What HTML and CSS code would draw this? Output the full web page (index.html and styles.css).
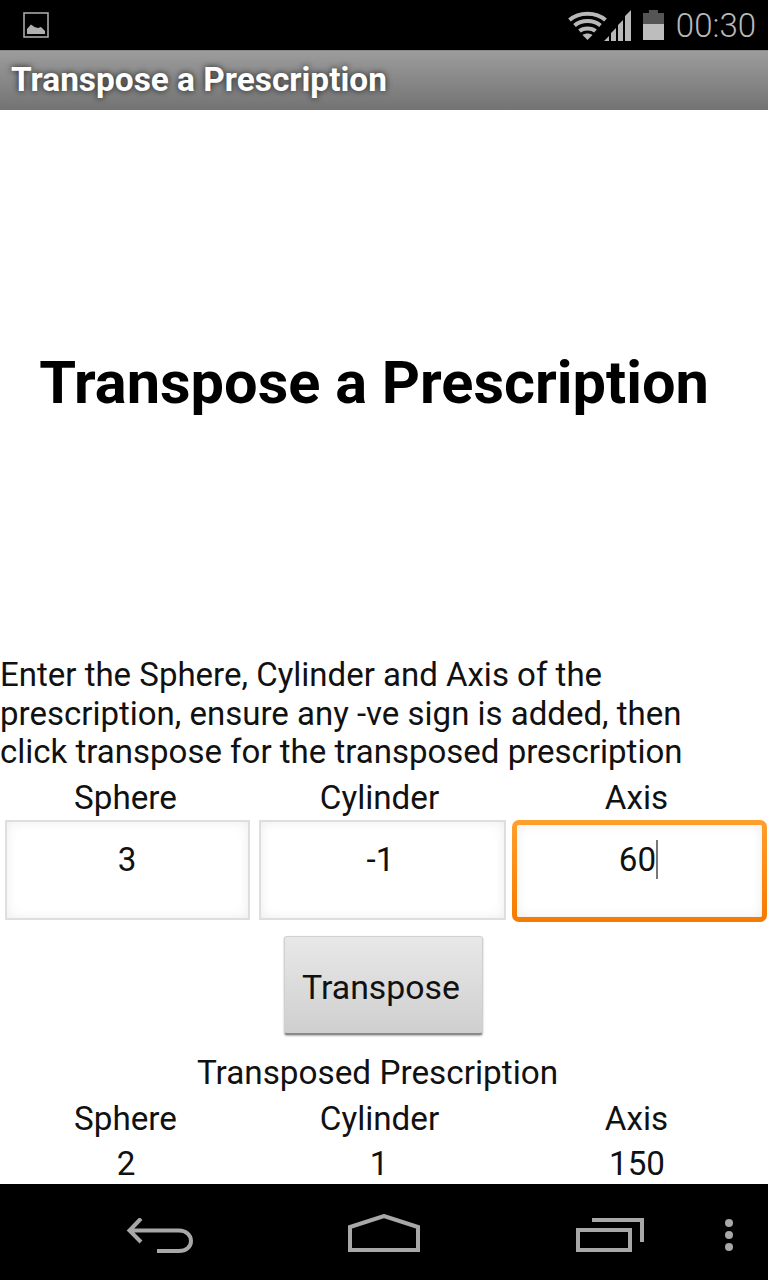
FILE: index.html
```html
<!DOCTYPE html>
<html lang="en">
<head>
  <meta charset="UTF-8">
  <meta name="viewport" content="width=device-width, initial-scale=1.0">
  <title>Transpose a Prescription</title>
  <link rel="stylesheet" href="styles.css">
</head>
<body>
  <div class="screen">

    <div class="status-bar">
      <svg class="notify-icon" width="26" height="26" viewBox="0 0 26 26">
        <rect x="1" y="1" width="24" height="24" fill="none" stroke="#a8a8a8" stroke-width="1.600"/>
        <path fill="#b0b0b0" d="M4 22V17L8 12.500L11.500 15L15 16L18 15L22 19V22Z"/>
      </svg>
      <div class="status-right">
        <svg class="wifi" width="39" height="29" viewBox="0 0 39 29">
          <path fill="none" stroke="#b8b8b8" stroke-width="4" d="M1.500 9C11 .5 28 .5 37.500 9"/>
          <path fill="none" stroke="#b8b8b8" stroke-width="4" d="M6.500 14.500C13.500 8.500 25.500 8.500 32.500 14.500"/>
          <path fill="none" stroke="#b8b8b8" stroke-width="4" d="M11.500 20C15.500 16.500 23.500 16.500 27.500 20"/>
          <path fill="#b8b8b8" d="M14.500 24C17.500 22 21.500 22 24.500 24L19.500 29Z"/>
        </svg>
        <svg class="signal" width="27" height="31" viewBox="0 0 27 31">
          <path fill="#b8b8b8" d="M0 31L5 26V31ZM7 31V23L12 18V31ZM14 31V15L19 10V31ZM21 31V6L27 0V31Z"/>
        </svg>
        <svg class="battery" width="21" height="30" viewBox="0 0 21 30">
          <path fill="#555" d="M6 0H15V3H21V14H0V3H6Z"/>
          <rect y="14" width="21" height="16" fill="#bdbdbd"/>
        </svg>
        <span class="clock">00:30</span>
      </div>
    </div>

    <div class="title-bar">Transpose a Prescription</div>

    <main class="content">
      <div class="banner">
        <h1>Transpose a Prescription</h1>
      </div>

      <p class="intro">Enter the Sphere, Cylinder and Axis of the prescription, ensure any -ve sign is added, then click transpose for the transposed prescription</p>

      <div class="row labels">
        <span>Sphere</span>
        <span>Cylinder</span>
        <span>Axis</span>
      </div>

      <div class="row inputs">
        <div class="field">3</div>
        <div class="field">-1</div>
        <div class="field focused"><span class="typed">60</span></div>
      </div>

      <div class="button-row">
        <button class="transpose">Transpose</button>
      </div>

      <div class="result-title">Transposed Prescription</div>

      <div class="row labels result-labels">
        <span>Sphere</span>
        <span>Cylinder</span>
        <span>Axis</span>
      </div>

      <div class="row values">
        <span>2</span>
        <span>1</span>
        <span>150</span>
      </div>
    </main>

    <div class="nav-bar">
      <svg class="nav-back" width="68" height="36" viewBox="0 0 68 36">
        <path fill="none" stroke="#a8a8a8" stroke-width="4" d="M15 .5L3.500 12.500L15 24M3.500 12.500H53C60 12.500 65 17 65 23C65 29 60 33 53 33H31"/>
      </svg>
      <svg class="nav-home" width="72" height="38" viewBox="0 0 72 38">
        <path fill="none" stroke="#a8a8a8" stroke-width="4" d="M2 36V13L36 2L70 13V36Z"/>
      </svg>
      <svg class="nav-recent" width="68" height="34" viewBox="0 0 68 34">
        <rect x="2" y="12" width="52" height="20" fill="none" stroke="#a8a8a8" stroke-width="4"/>
        <path fill="none" stroke="#a8a8a8" stroke-width="4" d="M16 2H66V24"/>
      </svg>
      <svg class="nav-menu" width="10" height="34" viewBox="0 0 10 34">
        <circle cx="5" cy="5" r="4" fill="#a8a8a8"/>
        <circle cx="5" cy="17" r="4" fill="#a8a8a8"/>
        <circle cx="5" cy="29" r="4" fill="#a8a8a8"/>
      </svg>
    </div>

  </div>
</body>
</html>
```

FILE: styles.css
```css
body {
  margin: 0;
  background-color: #000;
  font-family: Roboto, "Liberation Sans", sans-serif;
  color: #111;
}

.screen {
  width: 768px;
  height: 1280px;
  display: flex;
  flex-direction: column;
  overflow: hidden;
}

/* Status bar */
.status-bar {
  height: 50px;
  display: flex;
  align-items: center;
  justify-content: space-between;
  background-color: #000;
}

.notify-icon {
  margin-left: 23px;
}

.status-right {
  display: flex;
  align-items: center;
  margin-right: 12px;
}

.signal {
  margin-left: -3px;
}

.battery {
  margin-left: 12px;
  margin-top: -1px;
}

.clock {
  margin-left: 12px;
  font-size: 33px;
  font-weight: 300;
  color: #b8b8b8;
}

/* Title bar */
.title-bar {
  height: 60px;
  box-sizing: border-box;
  padding-left: 11px;
  line-height: 57px;
  font-size: 33.400px;
  font-weight: 700;
  color: #fff;
  text-shadow: 0 0 6px rgba(0, 0, 0, 0.8);
  background: linear-gradient(#9c9c9c, #737373);
  border-top: 1px solid #888;
}

/* Main content */
.content {
  height: 1074px;
  background-color: #fff;
  overflow: hidden;
}

.banner {
  height: 546px;
  display: flex;
  align-items: center;
  justify-content: center;
}

.banner h1 {
  margin: 0 0 0 -20px;
  font-size: 59.500px;
  font-weight: 700;
  color: #000;
  white-space: nowrap;
}

.intro {
  margin: 0;
  height: 120px;
  width: 700px;
  font-size: 33px;
  line-height: 38.500px;
}

.row {
  display: grid;
  text-align: center;
  font-size: 33.200px;
}

.labels {
  grid-template-columns: 251px 257px 257px;
  height: 44px;
  line-height: 44px;
}

.inputs {
  grid-template-columns: 254px 256px 258px;
  height: 116px;
}

.field {
  box-sizing: border-box;
  height: 100px;
  margin-left: 5px;
  margin-right: 4px;
  padding-top: 16px;
  padding-right: 1px;
  line-height: 44px;
  border: 2px solid #dedede;
  box-shadow: inset 0 0 12px #ececec;
}

.field:nth-child(2) {
  padding-right: 4px;
}

.field.focused {
  height: 102px;
  margin-left: 2px;
  margin-right: 1px;
  padding-top: 13px;
  padding-right: 2px;
  border: 5px solid transparent;
  border-radius: 7px;
  background: linear-gradient(#fff, #fff) padding-box, linear-gradient(#ff9f2e, #f57a00) border-box;
}

.typed {
  border-right: 2px solid #777;
}

.button-row {
  height: 115px;
  display: flex;
  justify-content: center;
}

.transpose {
  width: 199px;
  height: 99px;
  margin-left: -2px;
  padding: 4px 10px 0 6px;
  font-family: inherit;
  font-size: 33.800px;
  color: #111;
  background: linear-gradient(#e8e8e8, #cfcfcf);
  border: 1px solid #d0d0d0;
  border-bottom: 2px solid #8a8a8a;
  border-radius: 3px;
  box-shadow: 0 1px 2px rgba(0, 0, 0, 0.3);
}

.result-title {
  height: 45px;
  line-height: 44px;
  text-align: center;
  font-size: 33.300px;
  margin-left: -13px;
}

.result-labels {
  height: 46px;
  line-height: 46px;
}

.values {
  grid-template-columns: 252px 254px 262px;
  line-height: 44px;
}

/* Nav bar */
.nav-bar {
  height: 96px;
  position: relative;
  background-color: #000;
}

.nav-bar svg {
  position: absolute;
}

.nav-back {
  left: 126px;
  top: 34px;
}

.nav-home {
  left: 348px;
  top: 30px;
}

.nav-recent {
  left: 576px;
  top: 34px;
}

.nav-menu {
  left: 724px;
  top: 34px;
}
```
